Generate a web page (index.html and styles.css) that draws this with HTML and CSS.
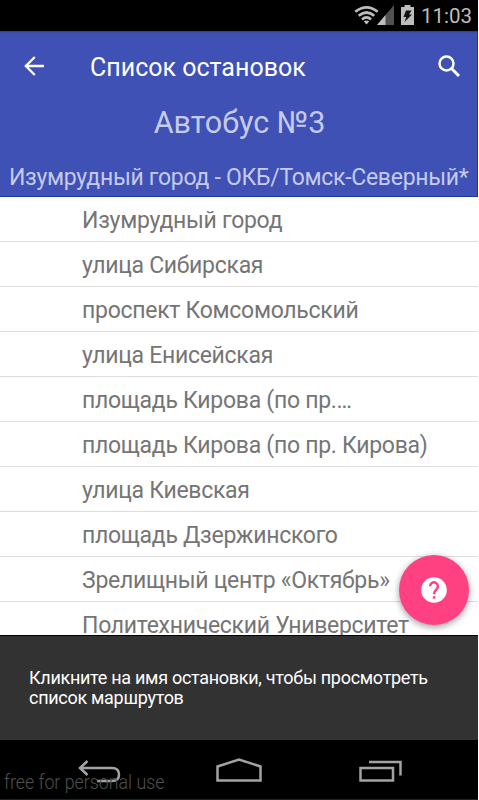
FILE: index.html
```html
<!DOCTYPE html>
<html lang="ru">
<head>
  <meta charset="UTF-8">
  <title>Список остановок</title>
  <meta name="viewport" content="width=device-width, initial-scale=1">
  <link rel="stylesheet" href="styles.css">
</head>
<body>
  <div class="screen">
    <div class="status-bar">
      <svg class="wifi" width="25" height="19" viewBox="0 0 25 19">
        <g fill="none" stroke="#bdbdbd" stroke-width="2.7">
          <path d="M1.300 5.800Q12.500 -3 23.700 5.800"/>
          <path d="M4.700 9.800Q12.500 3.200 20.300 9.800"/>
          <path d="M8 13.500Q12.500 9.400 17 13.500"/>
        </g>
        <path fill="#bdbdbd" d="M9.800 15.500q2.700-2.200 5.400 0L12.500 18.500z"/>
      </svg>
      <svg class="signal" width="18" height="20" viewBox="0 0 18 20">
        <path fill="#515151" d="M17 0v20H0z"/>
        <path fill="#bdbdbd" d="M8.500 10V20H0z"/>
      </svg>
      <svg class="battery" width="13" height="20" viewBox="0 0 13 20">
        <path fill="#bdbdbd" d="M3.500 0h6v2H13v18H0V2h3.500z"/>
        <path fill="#111" d="M5 5.500h5.500L8 9.500h3L3.500 17l1.800-5H2.500z"/>
      </svg>
      <span class="clock">11:03</span>
    </div>

    <header class="header">
      <div class="toolbar">
        <svg class="back" width="20" height="20" viewBox="0 0 20 20">
          <path fill="none" stroke="#fff" stroke-width="2.300" d="M20 10H2M10.800 1L1.800 10l9 9"/>
        </svg>
        <h1>Список остановок</h1>
        <svg class="search" width="23" height="23" viewBox="0 0 23 23">
          <g fill="none" stroke="#fff">
            <circle cx="8.500" cy="8.500" r="7" stroke-width="2.500"/>
            <path d="M13.500 13.500L21 21" stroke-width="3"/>
          </g>
        </svg>
      </div>
      <h2 class="bus">Автобус №3</h2>
      <p class="route">Изумрудный город - ОКБ/Томск-Северный*</p>
    </header>

    <main class="content">
      <ul class="stops">
        <li>Изумрудный город</li>
        <li>улица Сибирская</li>
        <li>проспект Комсомольский</li>
        <li>улица Енисейская</li>
        <li>площадь Кирова (по пр.…</li>
        <li>площадь Кирова (по пр. Кирова)</li>
        <li>улица Киевская</li>
        <li>площадь Дзержинского</li>
        <li>Зрелищный центр «Октябрь»</li>
        <li>Политехнический Университет</li>
      </ul>
      <button class="fab" aria-label="Помощь">
        <svg width="26" height="26" viewBox="0 0 26 26">
          <circle cx="13" cy="13" r="12.800" fill="#fff"/>
          <path fill="none" stroke="#ff4081" stroke-width="2.400" d="M9.100 9.200a3.900 3.900 0 1 1 6.700 2.700C14.200 13.400 13 14.400 13 17.200"/>
          <path fill="#ff4081" d="M11.800 19.200h2.500v2.500h-2.500z"/>
        </svg>
      </button>
    </main>

    <div class="snackbar">Кликните на имя остановки, чтобы просмотреть<br>список маршрутов</div>

    <nav class="nav-bar">
      <svg class="nav-icons" width="478" height="60" viewBox="0 0 478 60">
        <g fill="none" stroke="#a3a3a3" stroke-width="2.500">
          <path d="M80 28h32q7 0 7 6.500t-7 6.500H97M87.500 21L80 28l7.500 7"/>
          <path d="M217.500 40.500v-14L239 19.500l21.500 7v14z"/>
          <path d="M360.500 28h32.500v12.500h-32.500zM369 22h31.500v13.500"/>
        </g>
      </svg>
      <span class="watermark">free for personal use</span>
    </nav>
  </div>
</body>
</html>
```

FILE: styles.css
```css
* {
  box-sizing: border-box;
}
body {
  margin: 0;
  background: #fff;
  font-family: Roboto, "Noto Sans", sans-serif;
}
h1, h2, p, ul {
  margin: 0;
  padding: 0;
  font-weight: 400;
}
svg {
  display: block;
  flex: none;
}
.screen {
  width: 478px;
  height: 800px;
  display: flex;
  flex-direction: column;
  overflow: hidden;
}
.status-bar {
  height: 31px;
  flex: none;
  display: flex;
  align-items: flex-start;
  justify-content: flex-end;
  padding: 5px 6px 0 0;
  background: #000;
  color: #bdbdbd;
}
.wifi {
  margin: 1px -2px 0 0;
}
.signal {
  margin-right: 6px;
}
.clock {
  margin-left: 7px;
  font-size: 20.5px;
  line-height: 22px;
}
.header {
  height: 166px;
  flex: none;
  background: linear-gradient(#303c80, #3f51b5 2px);
  border-right: 1px solid #1a35a5;
  border-bottom: 1px solid #1a35a5;
  white-space: nowrap;
}
.toolbar {
  height: 70px;
  display: flex;
  align-items: center;
  padding: 0 16px 0 24px;
}
.back {
  margin-right: 46px;
}
.search {
  margin-left: auto;
}
h1 {
  color: #fff;
  font-size: 25px;
  line-height: 32px;
  padding-top: 4px;
}
.bus {
  height: 44px;
  line-height: 44px;
  padding-left: 2px;
  text-align: center;
  font-size: 30.5px;
  color: #c5cae9;
}
.route {
  margin-top: 11px;
  height: 40px;
  line-height: 44px;
  padding-left: 9px;
  font-size: 23px;
  letter-spacing: -0.29px;
  color: #c5cae9;
}
.content {
  position: relative;
  height: 438px;
  flex: none;
  overflow: hidden;
}
.stops {
  list-style: none;
}
.stops li {
  height: 45px;
  padding-left: 82px;
  border-bottom: 1px solid #dedede;
  font-size: 23px;
  letter-spacing: -0.28px;
  line-height: 48px;
  color: #757575;
  white-space: nowrap;
}
.fab {
  position: absolute;
  right: 9px;
  bottom: 10px;
  width: 70px;
  height: 70px;
  padding: 0;
  border: none;
  border-radius: 50%;
  display: flex;
  align-items: center;
  justify-content: center;
  background: #ff4081;
  box-shadow: 0 2px 7px rgba(0, 0, 0, 0.4);
}
.snackbar {
  height: 105px;
  flex: none;
  padding: 32px 0 0 29px;
  background: #323232;
  border-top: 1px solid #000;
  color: #fff;
  font-size: 18px;
  letter-spacing: -0.29px;
  line-height: 20px;
  white-space: nowrap;
}
.nav-bar {
  position: relative;
  height: 60px;
  flex: none;
  background: #000;
  border-bottom: 1px solid #222;
}
.watermark {
  position: absolute;
  left: 4px;
  bottom: 5px;
  font-size: 20px;
  font-weight: 300;
  line-height: 24px;
  color: #505050;
  transform: scaleX(0.89);
  transform-origin: left;
}
```
